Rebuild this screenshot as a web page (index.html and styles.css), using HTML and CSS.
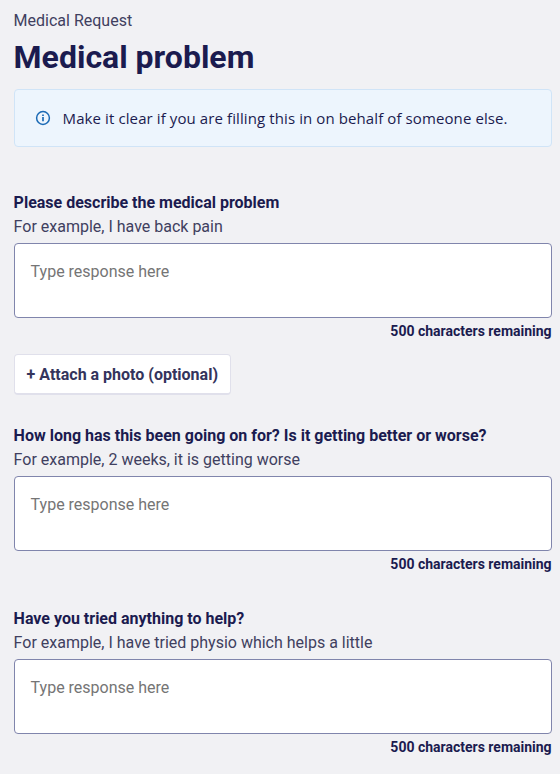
FILE: index.html
```html
<!DOCTYPE html>
<html lang="en">
<head>
<meta charset="utf-8">
<title>Medical problem</title>
<link rel="stylesheet" href="styles.css">
</head>
<body>
<main class="page">
  <p class="eyebrow">Medical Request</p>
  <h1 class="title">Medical problem</h1>
  <div class="notice">
    <svg class="notice-icon" viewBox="0 0 16 16" fill="none" stroke="currentColor"><circle cx="8" cy="8" r="6.4" stroke-width="1.5"/><path d="M8 7v4.3M8 4.4v1.6" stroke-width="1.7"/></svg>
    <span>Make it clear if you are filling this in on behalf of someone else.</span>
  </div>
  <form>
    <section class="question question-photo">
      <label class="label" for="q1">Please describe the medical problem</label>
      <p class="hint">For example, I have back pain</p>
      <textarea id="q1" class="field" placeholder="Type response here"></textarea>
      <p class="count">500 characters remaining</p>
      <button type="button" class="attach">+ Attach a photo (optional)</button>
    </section>
    <section class="question">
      <label class="label" for="q2">How long has this been going on for? Is it getting better or worse?</label>
      <p class="hint">For example, 2 weeks, it is getting worse</p>
      <textarea id="q2" class="field" placeholder="Type response here"></textarea>
      <p class="count">500 characters remaining</p>
    </section>
    <section class="question">
      <label class="label" for="q3">Have you tried anything to help?</label>
      <p class="hint">For example, I have tried physio which helps a little</p>
      <textarea id="q3" class="field" placeholder="Type response here"></textarea>
      <p class="count">500 characters remaining</p>
    </section>
  </form>
</main>
</body>
</html>
```
FILE: styles.css
```css
* { box-sizing: border-box; }
body { margin: 0; background: #f1f1f4; color: #40405f; font: 16px/24px Roboto, sans-serif; overflow: hidden; }
p, h1 { margin: 0; }
.page { height: 774px; padding: 9px 8.4px 0 13.6px; }
.title { color: #1b1b4f; font-size: 32px; line-height: 40px; font-weight: 700; margin-top: 4px; }
.notice { display: flex; align-items: center; gap: 12px; height: 58px; margin-top: 12px; padding: 0 20px; background: #edf5fd; border: 1px solid #d0e4f7; border-radius: 4px; color: #1b1b4f; font-family: "Open Sans", sans-serif; font-size: 15px; letter-spacing: 0.1px; }
.notice-icon { width: 16px; height: 16px; color: #1b6ab5; }
form { margin-top: 44px; }
.question { display: flex; flex-direction: column; margin-bottom: 32px; }
.question-photo { margin-bottom: 29px; }
.label { color: #1b1b4f; font-weight: 700; }
.field { display: block; width: 100%; height: 75px; margin-top: 4px; padding: 16px 16px; border: 1px solid #8085ac; border-radius: 4px; background: #fff; font: inherit; resize: none; outline: none; }
.field::placeholder { color: #757575; opacity: 1; }
.count { align-self: flex-end; margin-top: 3px; color: #1b1b4f; font-size: 14px; line-height: 21px; font-weight: 700; }
.attach { align-self: flex-start; height: 41px; margin-top: 12px; padding: 1px 12px 0; border: 1px solid #e0e0eb; border-bottom-width: 2px; border-radius: 4px; background: #fff; color: #34345c; font: 700 16px/24px Roboto, sans-serif; }
```
